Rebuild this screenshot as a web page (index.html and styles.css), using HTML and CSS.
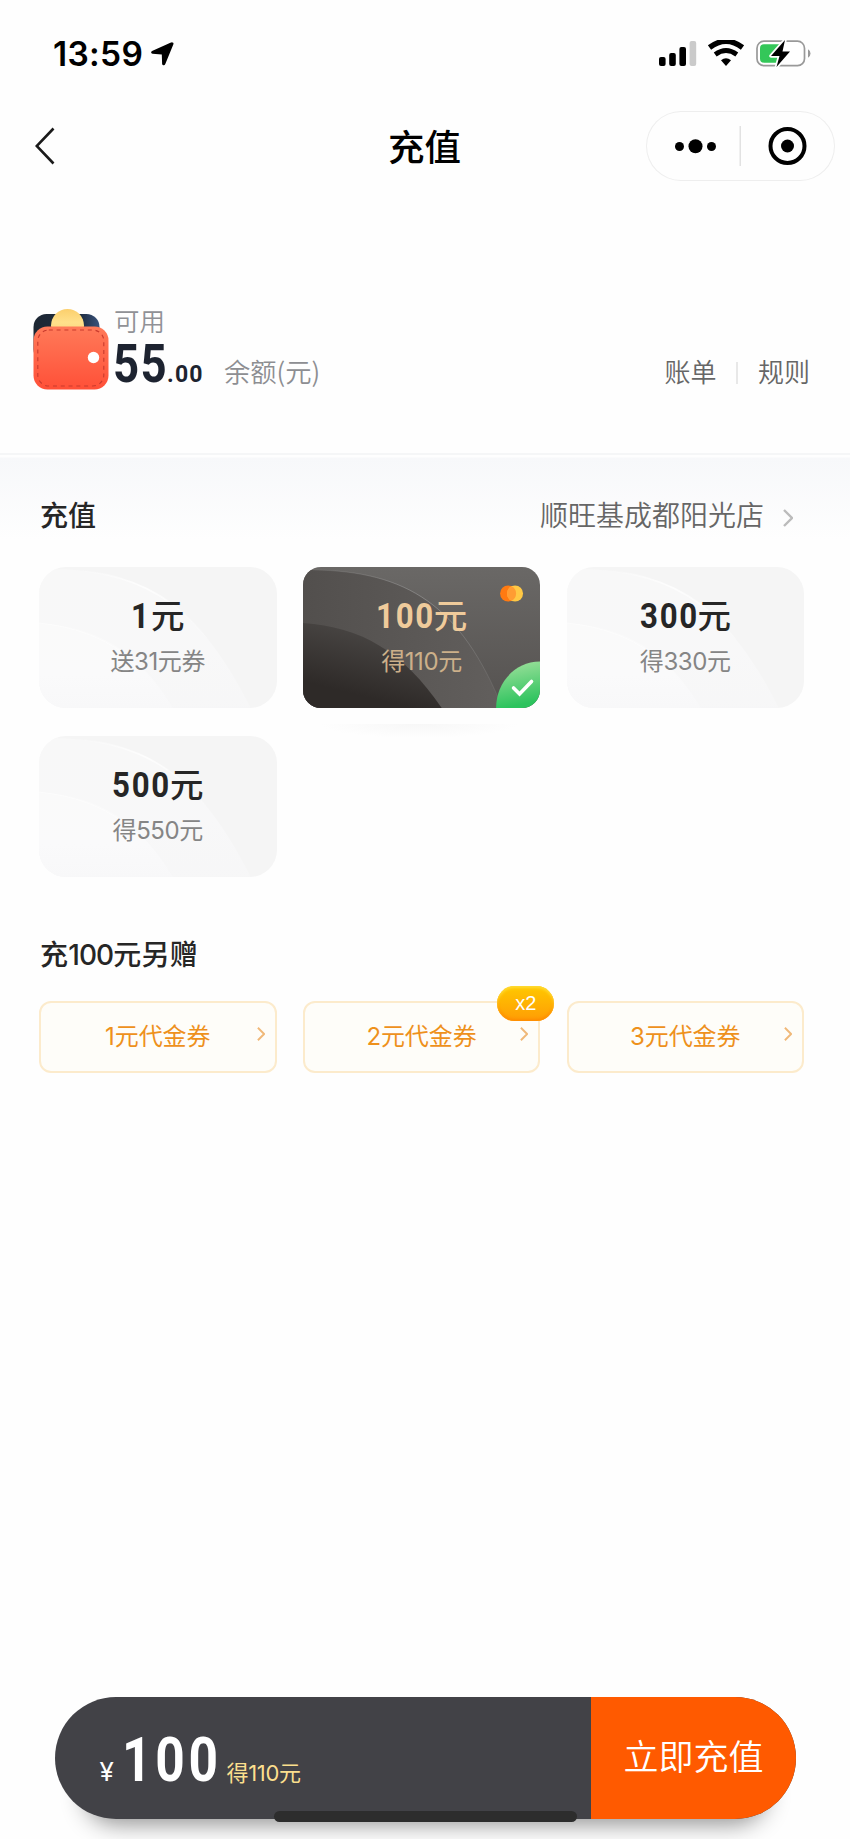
FILE: index.html
```html
<!DOCTYPE html>
<html lang="zh-CN">
<head>
<meta charset="utf-8">
<title>充值</title>
<link rel="stylesheet" href="styles.css">
</head>
<body>
<svg class="defs" width="0" height="0">
  <defs>
    <linearGradient id="lt2" x1="0" y1="0" x2="0" y2="1"><stop offset="0" stop-color="#fafafa"/><stop offset=".6" stop-color="#fafafb"/><stop offset="1" stop-color="#f8f8f9"/></linearGradient>
    <linearGradient id="edge" x1="0" y1="0" x2="1" y2="0"><stop offset=".1" stop-color="#fff" stop-opacity="0"/><stop offset=".45" stop-color="#fff" stop-opacity=".8"/><stop offset=".8" stop-color="#fff" stop-opacity="0"/></linearGradient>
    <linearGradient id="edgeDark" x1="0" y1="0" x2="1" y2="0"><stop offset="0" stop-color="#aaa" stop-opacity=".1"/><stop offset=".6" stop-color="#aaa" stop-opacity=".5"/><stop offset="1" stop-color="#aaa" stop-opacity=".1"/></linearGradient>
    <linearGradient id="dk0" x1="0" y1="0" x2="0" y2="1"><stop offset="0" stop-color="#6a6866"/><stop offset="1" stop-color="#555250"/></linearGradient>
    <linearGradient id="dk1" x1="0" y1="0" x2="1" y2="0"><stop offset="0" stop-color="#524f4d"/><stop offset="1" stop-color="#625f5d"/></linearGradient>
    <linearGradient id="dk2" x1=".2" y1="1" x2=".6" y2="0"><stop offset=".2" stop-color="#2e2a28"/><stop offset="1" stop-color="#4d4a48"/></linearGradient>
    <linearGradient id="ok" x1="0" y1="0" x2=".2" y2="1"><stop offset="0" stop-color="#a5e2a0"/><stop offset="1" stop-color="#2cc35d"/></linearGradient>
    <linearGradient id="red" x1="0" y1="0" x2="0" y2="1"><stop offset="0" stop-color="#ff7a59"/><stop offset="1" stop-color="#ff5038"/></linearGradient>
    <linearGradient id="coin" x1="0" y1="0" x2="0" y2="1"><stop offset="0" stop-color="#fbcf6c"/><stop offset=".4" stop-color="#ffe08b"/><stop offset="1" stop-color="#f6cd76"/></linearGradient>
    <linearGradient id="navy" x1="0" y1="0" x2="1" y2="0"><stop offset="0" stop-color="#1d2733"/><stop offset=".7" stop-color="#1d2b3f"/><stop offset="1" stop-color="#39537c"/></linearGradient>
    <symbol id="waves" viewBox="0 0 238 141">
      <path d="M0 2H20C110 4 164 44 212 141H0Z" fill="url(#lt2)" opacity=".6"/>
      <path d="M0 56C58 60 100 84 134 141H0Z" fill="url(#lt2)"/>
      <path d="M20 2C110 4 164 44 212 141" fill="none" stroke="url(#edge)" stroke-width="1.6"/>
      <path d="M0 56C36 60 62 70 84 86" fill="none" stroke="#fff" stroke-opacity=".45" stroke-width="1"/>
    </symbol>
    <symbol id="arrow" viewBox="0 0 10 18"><path d="M1 1L9 9L1 17" fill="none" stroke="currentColor" stroke-width="2.4"/></symbol>
  </defs>
</svg>
<main class="screen">
  <header class="status">
    <span class="clock">13:59</span>
    <svg class="loc" width="23" height="24" viewBox="0 0 23 24"><path d="M21.4.4Q23 .6 22.3 2.4L14.3 22Q13.5 24 11.8 23Q11 22.5 11.1 21.5L10.8 12.6L1.5 11.8Q-.3 11.3.3 9.8Q.6 9.1 1.6 8.7L19.4.8Q20.6.2 21.4.4Z"/></svg>
    <span class="grow"></span>
    <svg width="152" height="28" viewBox="0 0 152 28">
      <rect x="0" y="17" width="6.6" height="9" rx="2"/><rect x="10.2" y="13" width="6.6" height="13" rx="2"/><rect x="20.4" y="7" width="6.6" height="19" rx="2"/><rect x="30.6" y="1" width="6.6" height="25" rx="2" fill="#cacaca"/>
      <g fill="none" stroke="#000"><path d="M50.500 7.5Q67-5 83.500 7.5" stroke-width="5.400"/><path d="M56.2 14.5Q67 6.5 77.800 14.5" stroke-width="4.800"/></g>
      <path d="M62 20.200Q67 16.500 72 20.200L67 26Z"/>
      <rect x="98" y="1.200" width="47.500" height="24.500" rx="7" fill="#fff" stroke="#999" stroke-width="1.700"/>
      <path d="M149 9.200Q151.500 10.500 151.500 13.500Q151.500 16.500 149 17.800Z" fill="#999"/>
      <rect x="101" y="4.200" width="23" height="18.500" rx="4" fill="#34c759"/>
      <path d="M126 0L112 16H120.500L117.500 27L131 11.500H123.500Z" fill="#000" stroke="#fff" stroke-width="3.500" paint-order="stroke" stroke-linejoin="round"/>
    </svg>
  </header>
  <nav class="nav">
    <svg class="back" width="20" height="38" viewBox="0 0 20 38"><path d="M18.500 1.500L1.700 19L18.500 36.500" fill="none" stroke="#1a1a1a" stroke-width="2.600"/></svg>
    <h1 class="title">充值</h1>
    <div class="capsule">
      <svg width="189" height="70" viewBox="0 0 189 70"><circle cx="33.500" cy="35.500" r="4.500"/><circle cx="49.500" cy="35.200" r="7"/><circle cx="65.500" cy="35.500" r="4.500"/><rect x="93.500" y="15" width="1.500" height="40" fill="#e2e2e2"/><circle cx="141.500" cy="35" r="17" fill="none" stroke="#000" stroke-width="4"/><circle cx="141.500" cy="35" r="6.500"/></svg>
    </div>
  </nav>
  <section class="balance">
    <svg class="wallet" width="76" height="84" viewBox="0 0 76 84">
      <rect x=".5" y="6" width="66" height="48" rx="13" fill="url(#navy)"/>
      <circle cx="34.500" cy="17.500" r="16.500" fill="url(#coin)"/>
      <rect x=".5" y="18.500" width="75" height="63" rx="14" fill="url(#red)"/>
      <rect x="4.800" y="22" width="66" height="56" rx="11" fill="none" stroke="#c93a2d" stroke-width="1.100" stroke-dasharray="4 3.800"/>
      <circle cx="60.500" cy="49.500" r="5.700" fill="#fff"/>
    </svg>
    <div class="funds">
      <div class="label">可用</div>
      <div class="amount"><span class="din big">55</span><span class="din cents">.00</span><span class="unit">余额(元)</span></div>
    </div>
    <div class="links"><span>账单</span><i></i><span>规则</span></div>
  </section>
  <section class="panel">
    <div class="head"><h2>充值</h2><div class="store">顺旺基成都阳光店<svg width="10" height="18"><use href="#arrow"/></svg></div></div>
    <div class="cards">
      <div class="card"><svg class="art"><use href="#waves"/></svg><div class="price"><span class="din one">1</span>元</div><div class="sub">送31元券</div></div>
      <div class="card chosen">
        <svg class="art" viewBox="0 0 238 141" preserveAspectRatio="none">
          <rect width="238" height="141" fill="url(#dk0)"/>
          <path d="M0 3H10C104 4 158 38 200 141H0Z" fill="url(#dk1)"/>
          <path d="M0 56C58 60 100 84 139 141H0Z" fill="url(#dk2)"/>
          <path d="M10 3C104 4 158 38 200 141" fill="none" stroke="url(#edgeDark)" stroke-width="1"/>
          <circle cx="205.500" cy="26.500" r="8" fill="#ff7a11"/><circle cx="212.500" cy="26.500" r="8" fill="#ffc844"/><path d="M209 19.300A8 8 0 0 1 209 33.700A8 8 0 0 1 209 19.300" fill="#ff9c33"/>
          <path d="M193.500 141C193.500 116 212 94.500 238 94.500V141Z" fill="url(#ok)"/>
          <path d="M211 121L217 127L229 114.500" fill="none" stroke="#fff" stroke-width="3.600" stroke-linecap="round"/>
        </svg>
        <div class="price"><span class="din three">100</span>元</div><div class="sub">得110元</div>
      </div>
      <div class="card"><svg class="art"><use href="#waves"/></svg><div class="price"><span class="din three">300</span>元</div><div class="sub">得330元</div></div>
      <div class="card"><svg class="art"><use href="#waves"/></svg><div class="price"><span class="din three">500</span>元</div><div class="sub">得550元</div></div>
      <div class="glow"></div>
    </div>
    <h2 class="bonus">充<span class="num">100</span>元另赠</h2>
    <div class="coupons">
      <div class="coupon">1元代金券<svg width="8" height="14"><use href="#arrow"/></svg></div>
      <div class="coupon">2元代金券<svg width="8" height="14"><use href="#arrow"/></svg><b class="badge">x2</b></div>
      <div class="coupon">3元代金券<svg width="8" height="14"><use href="#arrow"/></svg></div>
    </div>
  </section>
  <footer class="pay">
    <div class="total"><span class="yen">¥</span><span class="din sum">100</span><span class="gain">得110元</span></div>
    <div class="submit">立即充值</div>
    <div class="home"></div>
  </footer>
</main>
</body>
</html>
```

FILE: styles.css
```css
* { box-sizing: border-box; }
body { margin: 0; background: #fefefe; font-family: Inter, "Noto Sans CJK SC", sans-serif; color: #262626; }
.defs { position: absolute; }
.screen { width: 850px; height: 1839px; overflow: hidden; display: flex; flex-direction: column; position: relative; }
h1, h2 { margin: 0; }
.grow { flex: 1; }
.status { height: 108px; padding: 0 39px 0 53px; display: flex; align-items: center; color: #000; }
.clock { font-size: 33.500px; font-weight: 600; letter-spacing: .3px; width: 98px; white-space: nowrap; }
.nav { height: 76px; padding: 0 15.500px 0 35px; display: grid; grid-template-columns: 189px 1fr 189px; align-items: center; }
.title { font-size: 36.500px; line-height: 44px; font-weight: 500; text-align: center; color: #000; padding: 3px 20.500px 0 0; }
.capsule { height: 70px; border-radius: 35px; box-shadow: inset 0 0 0 1px #eee; }
.capsule svg { display: block; }
.balance { height: 269px; padding: 124px 40px 0 33px; display: flex; align-items: flex-start; }
.funds { margin-left: 5px; flex: 1; }
.label { font-size: 25.500px; line-height: 28px; color: #909196; font-weight: 350; }
.amount { display: flex; align-items: baseline; height: 52px; line-height: 59px; }
.din { font-family: Roboto, sans-serif; font-weight: 700; display: inline-block; transform-origin: 0 50%; white-space: nowrap; }
.big { font-size: 53px; line-height: 56px; color: #1d2330; transform: scaleX(.86); letter-spacing: 1.500px; margin-left: -1px; width: 54px; }
.cents { font-size: 24.500px; color: #1d2330; transform: scaleX(.94); width: 57px; letter-spacing: 1.300px; }
.unit { font-size: 26.300px; font-weight: 350; color: #8d8e92; font-family: "Noto Sans CJK SC", sans-serif; }
.links { padding-top: 45px; display: flex; align-items: center; gap: 20px; font-size: 26px; line-height: 40px; font-weight: 350; color: #666; }
.links i { width: 1.500px; height: 22px; background: #e8e8e8; }
.panel { border-top: 2px solid #f5f6f7; padding: 33px 46px 0 39px; background: linear-gradient(#fefefe 2px, #f7f8fa 3px, #fefefe 85px); height: 900px; }
.head { display: flex; justify-content: space-between; align-items: center; height: 56px; padding-left: 1px; }
h2 { font-size: 28px; line-height: 40px; font-weight: 500; }
.store { font-size: 28px; line-height: 40px; font-weight: 350; color: #666; display: flex; align-items: center; gap: 19px; padding-right: 11px; }
.store svg { color: #bbb; margin-top: 3px; }
.cards { display: grid; grid-template-columns: repeat(3, 237.500px); grid-auto-rows: 141px; gap: 28.500px 26.250px; margin-top: 22.500px; position: relative; }
.card { position: relative; overflow: hidden; border-radius: 27px; background: #f5f5f5; padding-top: 25px; text-align: center; }
.art { position: absolute; inset: 0; width: 100%; height: 100%; }
.price { position: relative; display: flex; justify-content: center; align-items: baseline; font-size: 33.500px; line-height: 44px; font-weight: 500; font-family: "Noto Sans CJK SC", sans-serif; }
.price .din { font-size: 35.500px; letter-spacing: 2px; transform: scaleX(.88); }
.one { width: 20px; }
.three { width: 58px; }
.sub { position: relative; font-size: 24px; line-height: 30px; margin-top: 9px; color: #858585; letter-spacing: -.4px; }
.chosen { border-radius: 18px; color: #efcb9b; }
.chosen .sub { color: #ccb08a; }
.glow { position: absolute; left: 280px; top: 157px; width: 200px; height: 14px; background: radial-gradient(ellipse at 50% 0, #f7f7f7, #fefefe 70%); }
.bonus { margin: 58px 0 0 1px; letter-spacing: .2px; }
.num { letter-spacing: -.9px; }
.coupons { display: grid; grid-template-columns: repeat(3, 237.500px); gap: 26.250px; margin-top: 26px; }
.coupon { position: relative; height: 72px; border: 2px solid #fcebcc; border-radius: 12px; background: #fefdf9; display: flex; align-items: center; justify-content: center; font-size: 24px; line-height: 30px; color: #ee911c; letter-spacing: -.1px; }
.coupon svg { position: absolute; right: 10px; top: 24px; color: #f0b878; }
.badge { position: absolute; right: -16px; top: -17px; width: 57px; height: 35px; border-radius: 18px; background: linear-gradient(#ffc800, #ff9c05); box-shadow: inset 0 2px 3px #ffdc35, inset 0 -2px 3px #ff8a00; color: #fff; font: 400 20px/34px "Liberation Sans", sans-serif; text-align: center; }
.pay { position: absolute; left: 54.500px; top: 1697px; width: 741px; height: 122px; display: flex; border-radius: 61px; background: #424247; box-shadow: 0 34px 24px -30px #888; }
.total { flex: 1; display: flex; align-items: baseline; padding: 3px 0 0 45px; line-height: 130px; }
.yen { font-size: 26px; color: #fff; width: 22px; }
.sum { font-size: 62px; line-height: 120px; color: #fff; letter-spacing: 4.500px; transform: scaleX(.83); width: 105px; }
.gain { font-size: 22px; color: #fbdf8e; letter-spacing: -.3px; }
.submit { width: 205px; border-radius: 0 61px 61px 0; background: #ff5a00; color: #fff; font-size: 35px; line-height: 120px; font-weight: 350; padding-left: 33px; white-space: nowrap; }
.home { position: absolute; left: 219.500px; top: 114px; width: 303px; height: 11px; border-radius: 6px; background: #2d2d2d; }
```
